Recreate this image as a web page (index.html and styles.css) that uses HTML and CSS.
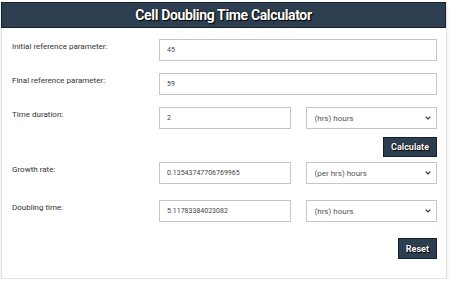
FILE: index.html
```html
<!DOCTYPE html>
<html lang="en">
<head>
    <meta charset="UTF-8">
    <meta name="viewport" content="width=device-width, initial-scale=1.0">
    <title>Cell Doubling Time Calculator</title>
    <link rel="stylesheet" href="styles.css">
</head>
<body>
    <div class="calc">
        <h1 class="calc-title">Cell Doubling Time Calculator</h1>

        <form class="calc-form" action="#" method="post">
            <div class="row">
                <label for="initial">Initial reference parameter:</label>
                <input class="wide" type="text" id="initial" value="45">
            </div>

            <div class="row">
                <label for="final">Final reference parameter:</label>
                <input class="wide" type="text" id="final" value="59">
            </div>

            <div class="row">
                <label for="duration">Time duration:</label>
                <input type="text" id="duration" value="2">
                <select id="durationUnit">
                    <option>(hrs) hours</option>
                    <option>(min) minutes</option>
                    <option>(days) days</option>
                </select>
            </div>

            <div class="actions">
                <button type="button" class="btn">Calculate</button>
            </div>

            <div class="row">
                <label for="rate">Growth rate:</label>
                <input type="text" id="rate" class="result" value="0.13543747706769965">
                <select id="rateUnit">
                    <option>(per hrs) hours</option>
                    <option>(per min) minutes</option>
                </select>
            </div>

            <div class="row row-last">
                <label for="doubling">Doubling time:</label>
                <input type="text" id="doubling" class="result" value="5.11783384023082">
                <select id="doublingUnit">
                    <option>(hrs) hours</option>
                    <option>(min) minutes</option>
                </select>
            </div>

            <div class="actions">
                <button type="reset" class="btn">Reset</button>
            </div>
        </form>
    </div>
</body>
</html>
```

FILE: styles.css
```css
body {
    margin: 0;
    padding: 0;
    font-family: Roboto, "Liberation Sans", sans-serif;
    background: #fff;
}

.calc {
    width: 444px;
    margin: 0 0 0 1px;
    border: 1px solid #e4e4e4;
    border-top: none;
    box-shadow: 0 2px 3px rgba(0, 0, 0, 0.12);
    padding-bottom: 14px;
}

.calc-title {
    margin: 2px 0 0 -1px;
    height: 24px;
    line-height: 24px;
    background-color: #2c3e50;
    border: 1px solid #16212d;
    color: #fff;
    text-align: center;
    font-size: 14px;
    font-weight: bold;
    letter-spacing: -0.35px;
    text-shadow: 0 0 1px #000, 1px 1px 1px #000;
}

.calc-form {
    padding: 11px 9px 0 10px;
}

.row {
    display: grid;
    grid-template-columns: 132px 1fr 1fr;
    column-gap: 15px;
    margin-bottom: 12px;
}

.row label {
    padding-top: 3px;
    font-size: 8px;
    color: #333;
}

input, select {
    box-sizing: border-box;
    height: 22px;
    margin: 0;
    border: 1px solid #c6c6c6;
    border-radius: 0;
    font-family: Roboto, "Liberation Sans", sans-serif;
    color: #444;
    background: #fff;
}

input {
    padding: 0 7px;
    font-size: 7px;
}

input.wide {
    grid-column: 2 / 4;
}

select {
    appearance: none;
    -webkit-appearance: none;
    padding: 0 20px 0 8px;
    font-size: 8px;
    color: #555;
    background-image: url("data:image/svg+xml,%3Csvg xmlns='http://www.w3.org/2000/svg' width='6' height='4' viewBox='0 0 6 4'%3E%3Cpath d='M0.6 0.6 L3 3 L5.4 0.6' fill='none' stroke='%23333' stroke-width='1.2'/%3E%3C/svg%3E");
    background-repeat: no-repeat;
    background-position: right 5px center;
}

.actions {
    display: flex;
    justify-content: flex-end;
    margin: -4px 0 5px;
}

.btn {
    height: 20px;
    padding: 0 7px;
    background-color: #2c3e50;
    border: 1px solid #16212d;
    border-radius: 0;
    color: #fff;
    font-family: Roboto, "Liberation Sans", sans-serif;
    font-size: 9px;
    font-weight: bold;
    text-shadow: 0 0 1px #000, 1px 1px 1px #000;
    cursor: pointer;
}

.btn:hover {
    background-color: #3b5268;
}

.row-last {
    margin-top: 16px;
    margin-bottom: 20px;
}

.row-last + .actions .btn {
    height: 21px;
}
```
